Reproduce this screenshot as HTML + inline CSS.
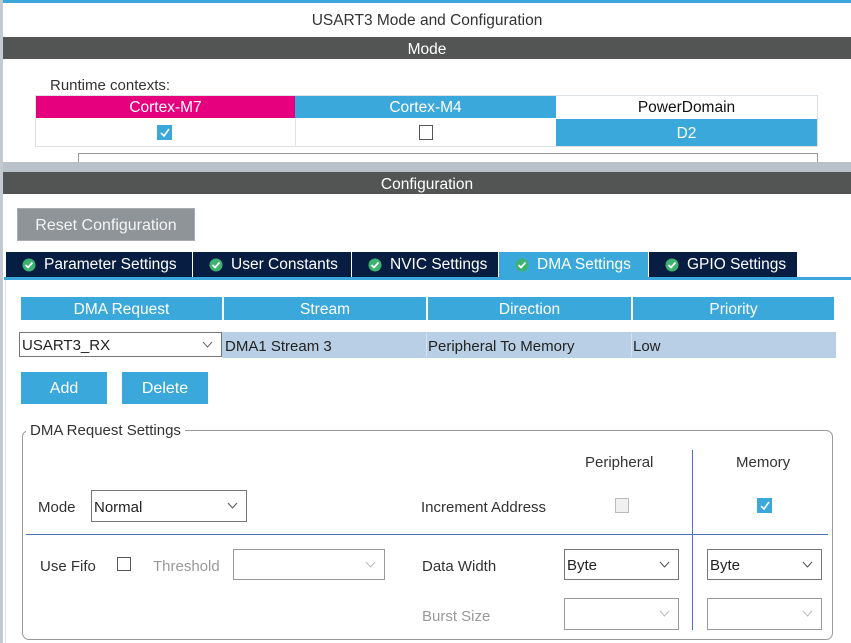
<!DOCTYPE html>
<html><head><meta charset="utf-8"><style>
*{margin:0;padding:0;box-sizing:border-box}
body{width:851px;height:643px;background:#fff;font-family:"Liberation Sans",sans-serif;font-size:15px;color:#222;position:relative;overflow:hidden}
.a{position:absolute}
.c{display:flex;align-items:center;justify-content:center}
.bar{background:#535554;color:#fff;left:3px;right:0;height:22px;padding-top:3px;font-size:15.5px}
.tab{top:252px;height:25px;background:#071e42;color:#fff;display:flex;align-items:center;font-size:15.5px;padding-top:1px}
.tab svg{margin:0 8px 0 16px}
.th{top:297px;height:23px;background:#3ba8db;color:#fff;padding-top:3px;font-size:15.5px}
.sel{border:1.5px solid #777;background:#fff;display:flex;align-items:center;padding-left:2px;padding-top:2px}
.arr{position:absolute;right:8px;top:50%;margin-top:-4px}
.btn{background:#3ba8db;color:#fff;padding-top:2px}
.cb{width:14px;height:14px;border:1.5px solid #555;background:#fff}
</style></head><body>
<div class="a" style="left:0;top:0;width:851px;height:3px;background:#3ba8db"></div>
<div class="a" style="left:0;top:0;width:3px;height:643px;background:#c3cbd1"></div>
<div class="a c" style="left:3px;right:0;top:9px;height:24px;color:#333;font-size:15.5px">USART3 Mode and Configuration</div>
<div class="a bar c" style="top:37px">Mode</div>
<div class="a" style="left:50px;top:77px;color:#333">Runtime contexts:</div>
<div class="a" style="left:35px;top:95px;width:783px;height:52px;border:1px solid #dde2e6"></div>
<div class="a c" style="left:36px;top:96px;width:259px;height:22px;background:#e6007e;color:#fff;padding-top:2px;font-size:15.5px">Cortex-M7</div>
<div class="a c" style="left:295px;top:96px;width:261px;height:22px;background:#3ba8db;color:#fff;padding-top:2px;font-size:15.5px">Cortex-M4</div>
<div class="a c" style="left:556px;top:96px;width:261px;height:22px;color:#111;padding-top:2px;font-size:15.5px">PowerDomain</div>
<div class="a" style="left:295px;top:118px;width:1px;height:28px;background:#dde2e6"></div>
<div class="a c" style="left:556px;top:119px;width:261px;height:27px;background:#3ba8db;color:#fff;padding-top:2px;font-size:15.5px">D2</div>
<div class="a c" style="left:157px;top:125px;width:15px;height:15px;background:#3ba8db"><svg width="12" height="12"><path d="M2 6 L5 9 L10 2" stroke="#fff" stroke-width="1.6" fill="none"/></svg></div>
<div class="a" style="left:419px;top:125px;width:14px;height:15px;border:1.5px solid #555"></div>
<div class="a" style="left:78px;top:153px;width:740px;height:12px;border:1px solid #999;border-bottom:none"></div>
<div class="a" style="left:3px;right:0;top:162px;height:10px;background:#b8c2c8"></div>
<div class="a bar c" style="top:172px">Configuration</div>
<div class="a c" style="left:17px;top:208px;width:178px;height:33px;background:#8f9499;border:1px solid #a8acb0;color:#f4f4f4;font-size:16px;padding-top:2px">Reset Configuration</div>

<div class="a tab" style="left:6px;width:186px"><svg width="14" height="14"><circle cx="7" cy="7" r="6.5" fill="#3cb371"/><path d="M3.5 7 L6 9.5 L10.5 4.5" stroke="#fff" stroke-width="1.8" fill="none"/></svg>Parameter Settings</div>
<div class="a tab" style="left:193px;width:158px"><svg width="14" height="14"><circle cx="7" cy="7" r="6.5" fill="#3cb371"/><path d="M3.5 7 L6 9.5 L10.5 4.5" stroke="#fff" stroke-width="1.8" fill="none"/></svg>User Constants</div>
<div class="a tab" style="left:352px;width:146px"><svg width="14" height="14"><circle cx="7" cy="7" r="6.5" fill="#3cb371"/><path d="M3.5 7 L6 9.5 L10.5 4.5" stroke="#fff" stroke-width="1.8" fill="none"/></svg>NVIC Settings</div>
<div class="a tab" style="left:499px;width:149px;background:#3ba8db"><svg width="14" height="14"><circle cx="7" cy="7" r="6.5" fill="#3cb371"/><path d="M3.5 7 L6 9.5 L10.5 4.5" stroke="#fff" stroke-width="1.8" fill="none"/></svg>DMA Settings</div>
<div class="a tab" style="left:649px;width:148px"><svg width="14" height="14"><circle cx="7" cy="7" r="6.5" fill="#3cb371"/><path d="M3.5 7 L6 9.5 L10.5 4.5" stroke="#fff" stroke-width="1.8" fill="none"/></svg>GPIO Settings</div>
<div class="a" style="left:4px;right:0;top:277px;height:3px;background:#3ba8db"></div>
<div class="a" style="left:5px;top:280px;width:1px;height:363px;background:#dde2e6"></div>

<div class="a th c" style="left:21px;width:201px">DMA Request</div>
<div class="a th c" style="left:224px;width:202px">Stream</div>
<div class="a th c" style="left:428px;width:203px">Direction</div>
<div class="a th c" style="left:633px;width:201px">Priority</div>
<div class="a" style="left:222px;top:332px;width:614px;height:26px;background:#b9cfe5"></div>
<div class="a sel" style="left:19px;top:332px;width:203px;height:25px;color:#222">USART3_RX<svg class="arr" width="11" height="7"><path d="M1 1 L5.5 6 L10 1" stroke="#666" fill="none"/></svg></div>
<div class="a" style="left:225px;top:338px">DMA1 Stream 3</div>
<div class="a" style="left:428px;top:338px">Peripheral To Memory</div>
<div class="a" style="left:633px;top:338px">Low</div>
<div class="a" style="left:426px;top:333px;width:1px;height:24px;background:#d8e2ec"></div>
<div class="a" style="left:631px;top:333px;width:1px;height:24px;background:#d8e2ec"></div>

<div class="a btn c" style="left:21px;top:372px;width:86px;height:32px;font-size:16px">Add</div>
<div class="a btn c" style="left:122px;top:372px;width:86px;height:32px;font-size:16px">Delete</div>

<div class="a" style="left:22px;top:430px;width:811px;height:210px;border:1px solid #999;border-radius:7px"></div>
<div class="a" style="left:26px;top:422px;background:#fff;padding:0 4px;color:#333">DMA Request Settings</div>
<div class="a" style="left:692px;top:450px;width:1px;height:180px;background:#4a70b8"></div>
<div class="a" style="left:26px;top:534px;width:802px;height:1px;background:#4a70b8"></div>
<div class="a" style="left:585px;top:454px;color:#333">Peripheral</div>
<div class="a" style="left:736px;top:454px;color:#333">Memory</div>
<div class="a" style="left:38px;top:499px;color:#333">Mode</div>
<div class="a sel" style="left:91px;top:490px;width:156px;height:32px">Normal<svg class="arr" width="11" height="7"><path d="M1 1 L5.5 6 L10 1" stroke="#555" fill="none"/></svg></div>
<div class="a" style="left:421px;top:499px;color:#333">Increment Address</div>
<div class="a" style="left:615px;top:498px;width:14px;height:15px;border:1px solid #bbb;background:#f0f0f0"></div>
<div class="a c" style="left:757px;top:498px;width:15px;height:15px;background:#3ba8db"><svg width="12" height="12"><path d="M2 6 L5 9 L10 2" stroke="#fff" stroke-width="1.6" fill="none"/></svg></div>

<div class="a" style="left:40px;top:558px;color:#333">Use Fifo</div>
<div class="a cb" style="left:117px;top:557px"></div>
<div class="a" style="left:153px;top:558px;color:#999">Threshold</div>
<div class="a sel" style="left:233px;top:549px;width:152px;height:31px;border-color:#999"><svg class="arr" width="11" height="7"><path d="M1 1 L5.5 6 L10 1" stroke="#bbb" fill="none"/></svg></div>
<div class="a" style="left:422px;top:558px;color:#333">Data Width</div>
<div class="a sel" style="left:564px;top:549px;width:115px;height:31px">Byte<svg class="arr" width="11" height="7"><path d="M1 1 L5.5 6 L10 1" stroke="#555" fill="none"/></svg></div>
<div class="a sel" style="left:707px;top:549px;width:115px;height:31px">Byte<svg class="arr" width="11" height="7"><path d="M1 1 L5.5 6 L10 1" stroke="#555" fill="none"/></svg></div>
<div class="a" style="left:422px;top:608px;color:#999">Burst Size</div>
<div class="a sel" style="left:564px;top:598px;width:115px;height:32px;border-color:#999"><svg class="arr" width="11" height="7"><path d="M1 1 L5.5 6 L10 1" stroke="#bbb" fill="none"/></svg></div>
<div class="a sel" style="left:707px;top:598px;width:115px;height:32px;border-color:#999"><svg class="arr" width="11" height="7"><path d="M1 1 L5.5 6 L10 1" stroke="#bbb" fill="none"/></svg></div>
</body></html>
